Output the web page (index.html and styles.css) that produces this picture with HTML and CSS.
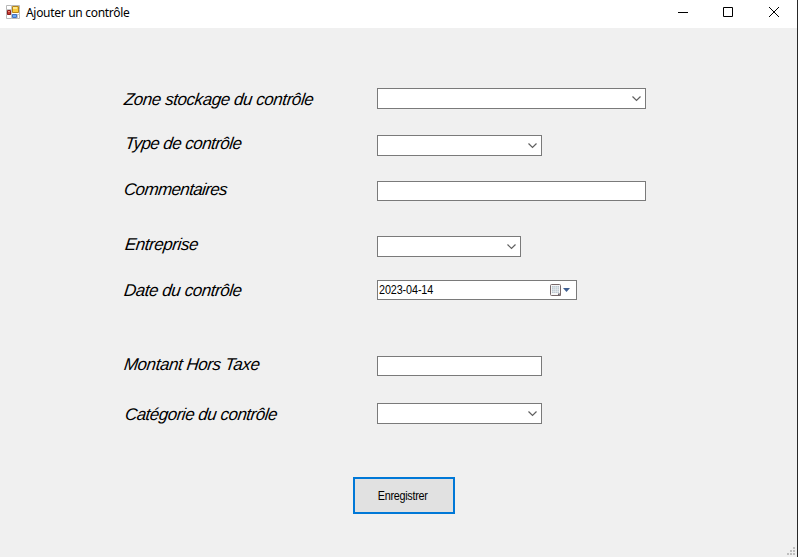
FILE: index.html
```html
<!DOCTYPE html>
<html lang="fr">
<head>
<meta charset="utf-8">
<title>Ajouter un contrôle</title>
<link rel="stylesheet" href="styles.css">
</head>
<body>
<div class="window">
  <header class="titlebar">
    <svg class="app-icon" width="14" height="14" viewBox="0 0 14 14">
      <path fill="#fff" stroke="#b8b8b8" d="M.5.5h13v13H.5z"/>
      <path stroke="#c4c4c4" d="M5.500 0v14M0 4.500h14M0 9.500h14M11.500 9v5"/>
      <path fill="#c43a30" stroke="#8d1c1c" d="M1.500 5.500h3v4h-3z"/><path fill="#ee8a74" d="M2 6h2v1H2z"/>
      <path fill="#f8ca3c" stroke="#b5851a" d="M6.500 1.500h6v6h-6z"/><path fill="#ffe88c" d="M7 2h4v2H7z"/>
      <path fill="#6aa8f4" stroke="#4272c4" d="M6.500 9.500h4v3h-4z"/>
    </svg>
    <h1 class="title">Ajouter un contrôle</h1>
    <svg class="controls" width="102" height="12" viewBox="0 0 102 12" fill="none" stroke="#000">
      <path d="M0 6.500h10"/><path d="M45.500 1.500h9v9h-9z"/><path d="M91 1l10 10M101 1L91 11"/>
    </svg>
  </header>
  <main class="form">
    <div class="row zone"><label class="low"><span class="w-zone">Zone stockage du contrôle</span></label><div class="field combo wide"><svg class="arrow" width="9" height="6"><path d="M.5.5l4 4 4-4"/></svg></div></div>
    <div class="row type"><label class="indent"><span class="w-type">Type de contrôle</span></label><div class="field combo medium"><svg class="arrow" width="9" height="6"><path d="M.5.5l4 4 4-4"/></svg></div></div>
    <div class="row comment"><label><span class="w-comment">Commentaires</span></label><div class="field wide"></div></div>
    <div class="row company"><label class="indent"><span class="w-company">Entreprise</span></label><div class="field combo narrow"><svg class="arrow" width="9" height="6"><path d="M.5.5l4 4 4-4"/></svg></div></div>
    <div class="row date"><label class="mid"><span class="w-date">Date du contrôle</span></label><div class="field picker"><span class="value">2023-04-14</span>
      <svg class="calendar" width="21" height="13" viewBox="0 0 21 13">
        <path fill="#f6f6f7" stroke="#77696a" d="M1.500.5h8q1 0 1 1v10h-9q-1 0-1-1v-9q0-1 1-1z"/>
        <path fill="#bac5d0" d="M2 2h7v7H2z"/><path stroke="#eef1f4" stroke-width=".6" d="M3.800 2v7M5.600 2v7M7.400 2v7M2 3.800h7M2 5.600h7M2 7.400h7"/>
        <path fill="#68606a" d="M8 12V9.500h3z"/><path fill="#3f5f91" d="M13 4h7l-3.500 4z"/>
      </svg></div></div>
    <div class="row amount"><label><span class="w-amount">Montant Hors Taxe</span></label><div class="field medium"></div></div>
    <div class="row category"><label class="indent low"><span class="w-category">Catégorie du contrôle</span></label><div class="field combo medium"><svg class="arrow" width="9" height="6"><path d="M.5.5l4 4 4-4"/></svg></div></div>
    <button class="save" type="button"><span>Enregistrer</span></button>
  </main>
  <svg class="grip" width="8" height="8" fill="#bfbfbf"><path d="M6 0h2v2H6zM3 3h2v2H3zM6 3h2v2H6zM0 6h2v2H0zM3 6h2v2H3zM6 6h2v2H6z"/></svg>
</div>
</body>
</html>
```
FILE: styles.css
```css
* { box-sizing: border-box; }
body { margin: 0; overflow: hidden; background: #292929; color: #000; }
.window { position: relative; display: flex; flex-direction: column; width: 797px; height: 557px; background: #f0f0f0; }
.titlebar { display: flex; align-items: flex-start; height: 28px; padding: 5px 17px 0 6px; background: #fff; }
.app-icon { flex: none; }
.title { margin: -1px 0 0 6px; font: 400 12px/18px "Noto Sans", "Open Sans", sans-serif; letter-spacing: -.3px; white-space: nowrap; }
.controls { margin: 1px 0 0 auto; flex: none; }
.form { padding-top: 60px; }
.row { display: grid; grid-template-columns: 253px auto; justify-content: start; align-items: start; height: 21px; margin-left: 124px; }
.type { margin-top: 26px; }
.comment { margin-top: 25px; }
.company { margin-top: 34px; }
.date { margin-top: 23px; }
.amount { margin-top: 55px; }
.category { margin-top: 26px; }
label { margin-top: -1px; font: italic 17px/20px "Liberation Sans", Arial, sans-serif; white-space: nowrap; }
label span { display: inline-block; transform: skewX(-7deg); letter-spacing: -.44px; }
label .w-type { letter-spacing: -.56px; }
label .w-comment { letter-spacing: -.62px; }
label .w-category { letter-spacing: -.5px; }
label.indent { padding-left: 1px; }
label.low { margin-top: 2px; }
label.mid { margin-top: 1px; }
.field { display: flex; align-items: center; height: 20px; border: 1px solid #7a7a7a; background: #fff; }
.combo { height: 21px; justify-content: flex-end; padding-right: 4px; }
.wide { width: 269px; }
.medium { width: 165px; }
.narrow { width: 144px; }
.arrow { fill: none; stroke: #606060; stroke-width: 1.200; }
.picker { width: 200px; justify-content: space-between; padding: 0 5px 0 1px; }
.value { font: 12px/18px "Liberation Sans", Arial, sans-serif; letter-spacing: -.12px; transform: scaleX(.9); transform-origin: left; }
.save { display: block; width: 102px; height: 37px; margin: 53px 0 0 353px; padding: 0; border: 2px solid #0078d7; background: #e1e1e1; color: #000; font: 12px/18px "Liberation Sans", Arial, sans-serif; letter-spacing: -.3px; }
.save span { display: inline-block; transform: translateX(-1px) scaleX(.9); }
.grip { position: absolute; right: 2px; bottom: 2px; }
```
